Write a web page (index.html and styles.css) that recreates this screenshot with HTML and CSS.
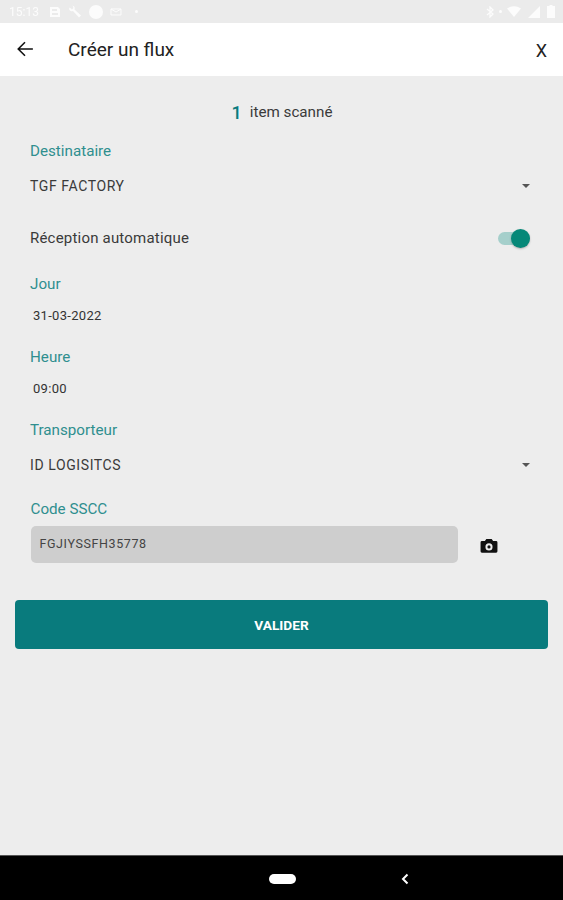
FILE: index.html
```html
<!DOCTYPE html>
<html lang="fr">
<head>
  <meta charset="UTF-8" />
  <meta name="viewport" content="width=device-width, initial-scale=1.0"/>
  <title>Créer un flux</title>
  <link rel="stylesheet" href="styles.css">
</head>
<body>
  <div class="status-bar">
    <div class="status-left">
      <span class="status-time">15:13</span>
      <svg class="status-icon" width="12" height="12" viewBox="0 0 12 12"><path d="M1 1h8l2 2v8H1z M3 3v2h5V3z M3 7v2h6V7z" fill="#fff" fill-rule="evenodd"/></svg>
      <svg class="status-icon" width="14" height="14" viewBox="0 0 14 14"><path d="M1 4a3.2 3.2 0 0 0 4 2l6 6.500 2-2-6.500-6a3.200 3.200 0 0 0-2-4L5.500 3 4 4.500 1.800 2.500A3 3 0 0 0 1 4z" fill="#fff"/></svg>
      <span class="status-dot"></span>
      <svg class="status-icon" width="12" height="8" viewBox="0 0 12 8"><path d="M1 1h10v6H1z M1 1l5 3 5-3" fill="none" stroke="#fff"/></svg>
      <span class="status-small-dot"></span>
    </div>
    <div class="status-right">
      <svg width="8" height="12" viewBox="0 0 8 12"><path d="M1 3l6 5-3 3V1l3 3-6 5" fill="none" stroke="#fff" stroke-width="1.300"/></svg>
      <span class="status-small-dot"></span>
      <svg width="14" height="11" viewBox="0 0 14 11"><path d="M0 2.500Q7-2 14 2.500L7 11z" fill="#fff"/></svg>
      <svg width="12" height="12" viewBox="0 0 12 12"><path d="M12 0v12H0z" fill="#fff"/></svg>
      <svg width="8" height="13" viewBox="0 0 8 13"><path d="M2.500 0h3v1H8v12H0V1h2.500z" fill="#fff"/></svg>
    </div>
  </div>

  <header class="toolbar">
    <svg class="back-icon" width="18" height="18" viewBox="0 0 16 16"><path d="M15 8H2 M8 2L2 8l6 6" fill="none" stroke="#111" stroke-width="1.400"/></svg>
    <h1 class="toolbar-title">Créer un flux</h1>
    <span class="toolbar-close">X</span>
  </header>

  <main class="content">
    <p class="scan-count"><strong>1</strong> item scanné</p>

    <section class="field field-dest">
      <label class="field-label">Destinataire</label>
      <div class="select-row">
        <span class="value">TGF FACTORY</span>
        <span class="caret"></span>
      </div>
    </section>

    <div class="toggle-row">
      <span class="value toggle-label">Réception automatique</span>
      <span class="switch"><span class="switch-thumb"></span></span>
    </div>

    <section class="field field-day">
      <label class="field-label">Jour</label>
      <div class="date-value">31-03-2022</div>
    </section>

    <section class="field field-hour">
      <label class="field-label">Heure</label>
      <div class="date-value">09:00</div>
    </section>

    <section class="field field-carrier">
      <label class="field-label">Transporteur</label>
      <div class="select-row">
        <span class="value">ID LOGISITCS</span>
        <span class="caret"></span>
      </div>
    </section>

    <section class="field field-code">
      <label class="field-label">Code SSCC</label>
      <div class="code-row">
        <div class="code-input">FGJIYSSFH35778</div>
        <svg class="camera-icon" width="18" height="16" viewBox="0 0 20 18"><path fill-rule="evenodd" d="M7 1h6l1.600 2.500H18a1.500 1.500 0 0 1 1.500 1.500v10a1.500 1.500 0 0 1-1.500 1.500H2A1.500 1.500 0 0 1 .5 15V5A1.500 1.500 0 0 1 2 3.500h3.400z M10 6a4 4 0 1 0 0 8 4 4 0 0 0 0-8z M10 8.200a1.800 1.800 0 1 1 0 3.600 1.800 1.800 0 0 1 0-3.600z" fill="#111"/></svg>
      </div>
    </section>

    <button class="submit-btn">VALIDER</button>
  </main>

  <nav class="nav-bar">
    <span class="nav-home"></span>
    <svg class="nav-back" width="8" height="12" viewBox="0 0 8 12"><path d="M6.500 1.500L2 6l4.500 4.500" fill="none" stroke="#fff" stroke-width="2"/></svg>
  </nav>
</body>
</html>
```

FILE: styles.css
```css
:root {
  --teal: #2f8f8f;
  --teal-dark: #097b7d;
  --page-bg: #ededed;
  --text: #3a3a3a;
}

* {
  box-sizing: border-box;
}

body {
  margin: 0;
  height: 900px;
  display: flex;
  flex-direction: column;
  overflow: hidden;
  background: var(--page-bg);
  color: var(--text);
  font-family: Roboto, "Liberation Sans", sans-serif;
}

.status-bar {
  height: 23px;
  padding: 0 8px 0 9px;
  display: flex;
  justify-content: space-between;
  align-items: center;
  background: #ebebeb;
}

.status-left, .status-right {
  display: flex;
  align-items: center;
  gap: 7px;
  opacity: 0.85;
  filter: blur(0.5px);
}

.status-time {
  color: #fff;
  font-size: 12px;
  margin-right: 3px;
}

.status-dot {
  width: 14px;
  height: 14px;
  border-radius: 50%;
  background: #fff;
}

.status-small-dot {
  width: 3px;
  height: 3px;
  border-radius: 50%;
  background: #fff;
  margin-left: 6px;
}

.status-right .status-small-dot {
  margin: 0 -2px;
}

.toolbar {
  height: 53px;
  padding: 0 15px 0 16px;
  display: flex;
  align-items: center;
  background: #fff;
}

.back-icon {
  margin-right: 34px;
  margin-top: -2px;
}

.toolbar-title {
  flex: 1;
  margin: 0;
  color: #222;
  font-size: 19px;
  font-weight: 400;
}

.toolbar-close {
  color: #222;
  font-size: 18px;
  margin-top: 2px;
  margin-right: 1px;
}

.content {
  flex: 1;
  padding: 0 15px;
}

.scan-count {
  height: 65px;
  margin: 0;
  padding: 26px 0 0 1px;
  display: flex;
  justify-content: center;
  align-items: flex-start;
  gap: 8px;
  font-size: 15.200px;
  line-height: 21px;
}

.scan-count strong {
  color: var(--teal-dark);
  font-size: 18px;
  font-weight: 500;
}

.field {
  padding: 0 15px;
}

.field-label {
  display: block;
  height: 20px;
  line-height: 20px;
  color: var(--teal);
  font-size: 15.200px;
}

.field-day { margin-top: 15px; }
.field-hour { margin-top: 11px; }
.field-carrier { margin-top: 11px; }
.field-code { margin-top: 10px; padding-left: 15.500px; }

.select-row {
  height: 50px;
  padding: 0 3px 0 0;
  display: flex;
  justify-content: space-between;
  align-items: center;
}

.field-carrier .select-row {
  height: 49px;
}

.value {
  font-size: 14px;
  letter-spacing: 0.600px;
}

.caret {
  width: 0;
  height: 0;
  border-left: 4px solid transparent;
  border-right: 4px solid transparent;
  border-top: 4.500px solid #555;
}

.toggle-row {
  height: 42px;
  padding: 0 18px 0 15px;
  display: flex;
  justify-content: space-between;
  align-items: center;
  margin-top: 6px;
}

.toggle-label {
  font-size: 15px;
  letter-spacing: 0.200px;
}

.switch {
  width: 32px;
  height: 13px;
  border-radius: 7px;
  background: #a5cfcb;
  display: flex;
  justify-content: flex-end;
  align-items: center;
}

.switch-thumb {
  width: 19px;
  height: 19px;
  border-radius: 50%;
  background: #068878;
  box-shadow: 0 1px 2px rgba(0, 0, 0, 0.25);
}

.date-value {
  height: 42px;
  padding: 1px 0 0 3px;
  display: flex;
  align-items: center;
  font-size: 13px;
  letter-spacing: 0.300px;
  color: #333;
}

.code-row {
  display: flex;
  align-items: center;
  margin-top: 7px;
}

.code-input {
  width: 427.500px;
  height: 37px;
  padding: 0 9px 2px;
  display: flex;
  align-items: center;
  background: #cecece;
  border-radius: 5px;
  font-size: 12.500px;
  letter-spacing: 0.600px;
  color: #444;
}

.camera-icon {
  margin: 2px 0 0 22px;
}

.submit-btn {
  width: 533px;
  height: 49px;
  margin-top: 37px;
  display: block;
  border: 0;
  border-radius: 4px;
  background: var(--teal-dark);
  color: #fff;
  font-family: inherit;
  font-size: 13.700px;
  font-weight: 700;
}

.nav-bar {
  height: 45px;
  flex-shrink: 0;
  padding-top: 1px;
  display: flex;
  align-items: center;
  background: #000;
  border-top: 1px solid #555;
  padding-left: 269px;
}

.nav-home {
  width: 27px;
  height: 10px;
  border-radius: 5px;
  background: #fff;
}

.nav-back {
  margin-left: 105px;
}
```
